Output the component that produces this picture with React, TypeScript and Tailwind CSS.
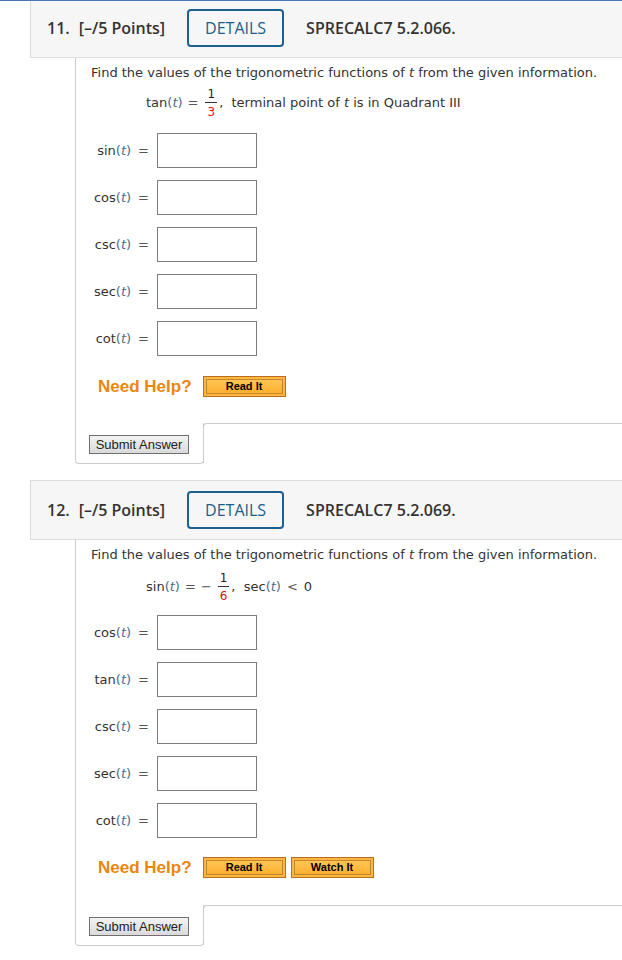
import type { ReactNode } from 'react';

const bodyFont = "font-[family-name:DejaVu_Sans,Verdana,sans-serif]";
const headFont = "font-['Open_Sans','Noto_Sans',sans-serif]";
const arial = "font-['Liberation_Sans',Arial,sans-serif]";

function Fn({ name }: { name: string }) {
    return (
        <span>
            <span className="text-[#333]">{name}</span>
            <span className="text-[#4b6a8c]">
                (<i>t</i>)
            </span>
        </span>
    );
}

function Frac({ num, den }: { num: string; den: string }) {
    return (
        <span className="mx-[2px] inline-flex flex-col items-center text-[12px] leading-none">
            <span className="border-b border-[#333] px-[2px] pb-[2px] text-[#222]">{num}</span>
            <span className="pt-[3px] text-[#e3120b]">{den}</span>
        </span>
    );
}

function HelpButton({ label }: { label: string }) {
    return (
        <span className="flex h-[21px] w-[83px] border border-[#b8701e] bg-[#ffb640] p-[2px]">
            <span
                className={`flex flex-1 items-center justify-center border border-[#c8862c] bg-linear-to-b from-[#ffc552] to-[#ffb030] text-[11px] font-bold leading-none text-black ${arial}`}
            >
                {label}
            </span>
        </span>
    );
}

interface QuestionProps {
    num: string;
    code: string;
    math: ReactNode;
    mathTop: string;
    inputsTop: string;
    rows: string[];
    help: string[];
    helpTop: string;
    tabTop: string;
}

function Question({ num, code, math, mathTop, inputsTop, rows, help, helpTop, tabTop }: QuestionProps) {
    return (
        <div>
            {/* Header bar */}
            <div className={`ml-[30px] flex h-[60px] items-center border-y border-l border-[#dcdcdc] bg-[#f6f6f6] ${headFont}`}>
                <span className="ml-[16px] text-[16px] font-semibold text-[#333]">{num}.</span>
                <span className="ml-[9px] text-[16px] font-semibold text-[#333]">[–/5 Points]</span>
                <span className="ml-[22px] flex h-[38px] w-[97px] items-center justify-center rounded-[4px] border-2 border-[#1f5f8e] text-[16px] text-[#1d5d8c]">
                    DETAILS
                </span>
                <span className="ml-[22px] text-[16px] font-semibold text-[#333]">{code}</span>
            </div>

            {/* Content */}
            <div className={`ml-[75px] ${bodyFont} text-[13px] text-[#333]`}>
                <div className="border-l border-[#cccccc] pl-[15px] pt-[6px]">
                    <div className="leading-[18px]">
                        Find the values of the trigonometric functions of <i>t</i> from the given information.
                    </div>
                    <div className={`${mathTop} flex h-[28px] items-center pl-[55px]`}>{math}</div>

                    <div className={`${inputsTop} flex flex-col gap-[12px]`}>
                        {rows.map((r) => (
                            <div key={r} className="flex items-center">
                                <span className="flex w-[58px] justify-end">
                                    <Fn name={r} />
                                    <span className="ml-[7px] text-[#555]">=</span>
                                </span>
                                <span className="ml-[8px] h-[35px] w-[100px] border border-[#7c7c7c] bg-white" />
                            </div>
                        ))}
                    </div>

                    <div className={`${helpTop} flex h-[21px] items-center`}>
                        <span className={`ml-[7px] text-[17px] font-bold text-[#ea860f] ${arial}`}>Need Help?</span>
                        <span className="ml-[11px] flex gap-[5px]">
                            {help.map((h) => (
                                <HelpButton key={h} label={h} />
                            ))}
                        </span>
                    </div>
                    <div className={tabTop} />
                </div>

                {/* Submit tab */}
                <div className="flex h-[41px]">
                    <div className="w-[129px] rounded-b-[4px] border-x border-b border-[#cccccc] pl-[13px] pt-[12px]">
                        <button
                            className={`flex h-[19px] w-[100px] items-center justify-center border border-[#707070] bg-linear-to-b from-[#f3f3f3] to-[#dadada] text-[13px] leading-none text-[#222] ${arial}`}
                        >
                            Submit Answer
                        </button>
                    </div>
                    <div className="-ml-px h-[40px] flex-1 rounded-tl-[4px] border-t border-l border-[#cccccc]" />
                </div>
            </div>
        </div>
    );
}

export default function App() {
    return (
        <div className="min-h-[960px] w-[622px] overflow-hidden bg-white">
            <div className="relative z-10 h-px bg-[#4a78b5]" />
            <div className="-mt-[3px]">
                <Question
                    num="11"
                    code="SPRECALC7 5.2.066."
                    mathTop="mt-[7px]"
                    inputsTop="mt-[16px]"
                    math={
                        <>
                            <Fn name="tan" />
                            <span className="mx-[5px] text-[#555]">=</span>
                            <Frac num="1" den="3" />
                            <span>,&nbsp; terminal point of <i>t</i> is in Quadrant III</span>
                        </>
                    }
                    rows={['sin', 'cos', 'csc', 'sec', 'cot']}
                    help={['Read It']}
                    helpTop="mt-[20px]"
                    tabTop="h-[26px]"
                />
            </div>
            <div className="mt-[16px]">
                <Question
                    num="12"
                    code="SPRECALC7 5.2.069."
                    mathTop="mt-[9px]"
                    inputsTop="mt-[14px]"
                    math={
                        <>
                            <Fn name="sin" />
                            <span className="mx-[5px] text-[#555]">=</span>
                            <span className="mr-[4px] text-[#555]">−</span>
                            <Frac num="1" den="6" />
                            <span>,&nbsp;&nbsp;</span>
                            <Fn name="sec" />
                            <span className="mx-[6px] text-[#555]">&lt;</span>
                            <span>0</span>
                        </>
                    }
                    rows={['cos', 'tan', 'csc', 'sec', 'cot']}
                    help={['Read It', 'Watch It']}
                    helpTop="mt-[19px]"
                    tabTop="h-[27px]"
                />
            </div>
        </div>
    );
}
